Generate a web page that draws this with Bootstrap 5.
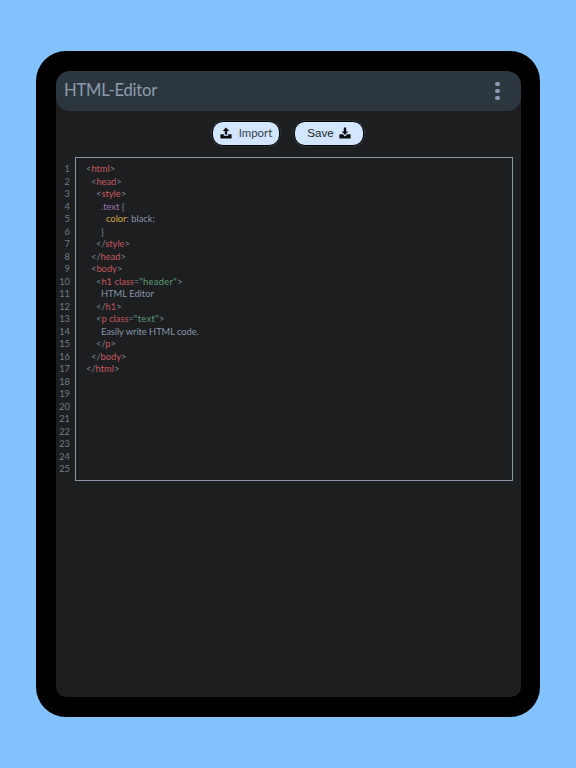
<!DOCTYPE html>
<html lang="en">
<head>
<meta charset="utf-8">
<title>HTML-Editor</title>
<link rel="stylesheet" href="https://cdn.jsdelivr.net/npm/bootstrap@5.3.0/dist/css/bootstrap.min.css">
<style>
html,body{height:100%;}
body{background:#84c1ff;font-family:Lato,"Open Sans",sans-serif;overflow:hidden;padding:51px 36px;}
.device{width:504px;height:666px;background:#000;border-radius:30px;padding:20px 19px 20px 20px;}
.screen{height:100%;background:#1c1e20;border-radius:14px 14px 10px 10px;overflow:hidden;}
.appbar{height:40px;background:#2c363f;border-radius:14px;padding:0 21px 2px 8px;}
.app-title{font-size:16.6px;font-weight:400;letter-spacing:-.2px;color:#8d9cac;line-height:1;}
.dots{display:flex;flex-direction:column;gap:2.4px;padding-top:2px;}
.dots i{display:block;width:4.6px;height:4.6px;border-radius:50%;background:#8d9cb5;}
.tools{height:44px;margin-bottom:2px;gap:14px;padding-right:1px;}
.tool-btn{height:25px;background:#d2e7ff;border:1px solid #000;border-radius:11px;color:#3a4148;font-size:11.4px;line-height:1;padding:0;gap:7px;box-shadow:0 0 0 1px #2a2f34;}
.tool-btn:hover{background:#d2e7ff;color:#3a4148;}
.btn-import{width:68px;}
.btn-save{width:70px;font-family:"Liberation Sans",Arial,sans-serif;color:#1a1d20;gap:5px;font-size:11.6px;}
.btn-save:hover{color:#1a1d20;}
.tool-btn svg{width:12px;height:12px;display:block;}
.editor-area{padding-left:1px;padding-right:8px;}
.gutter{width:13px;flex:none;text-align:right;color:#727c87;padding-top:6px;}
.code-box{flex:1;height:324px;border:1px solid #8a97a6;margin-left:5px;padding:5px 10px;overflow:hidden;}
.code-line,.num{height:12.5px;line-height:12.5px;font-size:9.3px;white-space:pre;}
.code-line{color:#7f8ca0;word-spacing:.12px;}
.t{color:#c9585f;}
.p{color:#7d8894;}
.a{color:#c9585f;}
.s{color:#5f9e78;letter-spacing:.35px;}
.c{color:#9a72b0;}
.y{color:#d1a93f;}
.v{color:#8696aa;}
.v-wide{letter-spacing:-.06px;}
</style>
</head>
<body>
<div class="device">
  <div class="screen">
    <div class="appbar d-flex align-items-center justify-content-between">
      <div class="app-title">HTML-Editor</div>
      <div class="dots" aria-label="More"><i></i><i></i><i></i></div>
    </div>
    <div class="tools d-flex align-items-center justify-content-center">
      <button class="btn tool-btn btn-import d-flex align-items-center justify-content-center" type="button">
        <svg viewBox="0 0 12 12" fill="#0b0d10"><path d="M6 .6 9.3 4H7.2v3.6H4.8V4H2.7z"/><path d="M.4 7.2h3.4v1.5h4.4V7.2h3.4v4.2H.4z"/></svg>
        <span>Import</span>
      </button>
      <button class="btn tool-btn btn-save d-flex align-items-center justify-content-center" type="button">
        <span>Save</span>
        <svg viewBox="0 0 12 12" fill="#0b0d10"><path d="M4.8.6h2.4v3.8h2.1L6 7.9 2.7 4.4h2.1z"/><path d="M.4 7.2h3.4L6 9.4l2.2-2.2h3.4v4.2H.4z"/></svg>
      </button>
    </div>
    <div class="editor-area d-flex">
      <div class="gutter">
        <div class="num">1</div><div class="num">2</div><div class="num">3</div><div class="num">4</div><div class="num">5</div>
        <div class="num">6</div><div class="num">7</div><div class="num">8</div><div class="num">9</div><div class="num">10</div>
        <div class="num">11</div><div class="num">12</div><div class="num">13</div><div class="num">14</div><div class="num">15</div>
        <div class="num">16</div><div class="num">17</div><div class="num">18</div><div class="num">19</div><div class="num">20</div>
        <div class="num">21</div><div class="num">22</div><div class="num">23</div><div class="num">24</div><div class="num">25</div>
      </div>
      <div class="code-box">
        <div class="code-line"><span class="p">&lt;</span><span class="t">html</span><span class="p">&gt;</span></div>
        <div class="code-line">  <span class="p">&lt;</span><span class="t">head</span><span class="p">&gt;</span></div>
        <div class="code-line">    <span class="p">&lt;</span><span class="t">style</span><span class="p">&gt;</span></div>
        <div class="code-line">      <span class="c">.text</span> <span class="p">{</span></div>
        <div class="code-line">        <span class="y">color</span><span class="p">:</span> <span class="v">black</span><span class="p">;</span></div>
        <div class="code-line">      <span class="p">}</span></div>
        <div class="code-line">    <span class="p">&lt;/</span><span class="t">style</span><span class="p">&gt;</span></div>
        <div class="code-line">  <span class="p">&lt;/</span><span class="t">head</span><span class="p">&gt;</span></div>
        <div class="code-line">  <span class="p">&lt;</span><span class="t">body</span><span class="p">&gt;</span></div>
        <div class="code-line">    <span class="p">&lt;</span><span class="t">h1</span> <span class="a">class</span><span class="p">=</span><span class="s">"header"</span><span class="p">&gt;</span></div>
        <div class="code-line">      <span class="v">HTML Editor</span></div>
        <div class="code-line">    <span class="p">&lt;/</span><span class="t">h1</span><span class="p">&gt;</span></div>
        <div class="code-line">    <span class="p">&lt;</span><span class="t">p</span> <span class="a">class</span><span class="p">=</span><span class="s">"text"</span><span class="p">&gt;</span></div>
        <div class="code-line">      <span class="v v-wide">Easily write HTML code.</span></div>
        <div class="code-line">    <span class="p">&lt;/</span><span class="t">p</span><span class="p">&gt;</span></div>
        <div class="code-line">  <span class="p">&lt;/</span><span class="t">body</span><span class="p">&gt;</span></div>
        <div class="code-line"><span class="p">&lt;/</span><span class="t">html</span><span class="p">&gt;</span></div>
      </div>
    </div>
  </div>
</div>
<script src="https://cdn.jsdelivr.net/npm/bootstrap@5.3.0/dist/js/bootstrap.bundle.min.js"></script>
</body>
</html>
